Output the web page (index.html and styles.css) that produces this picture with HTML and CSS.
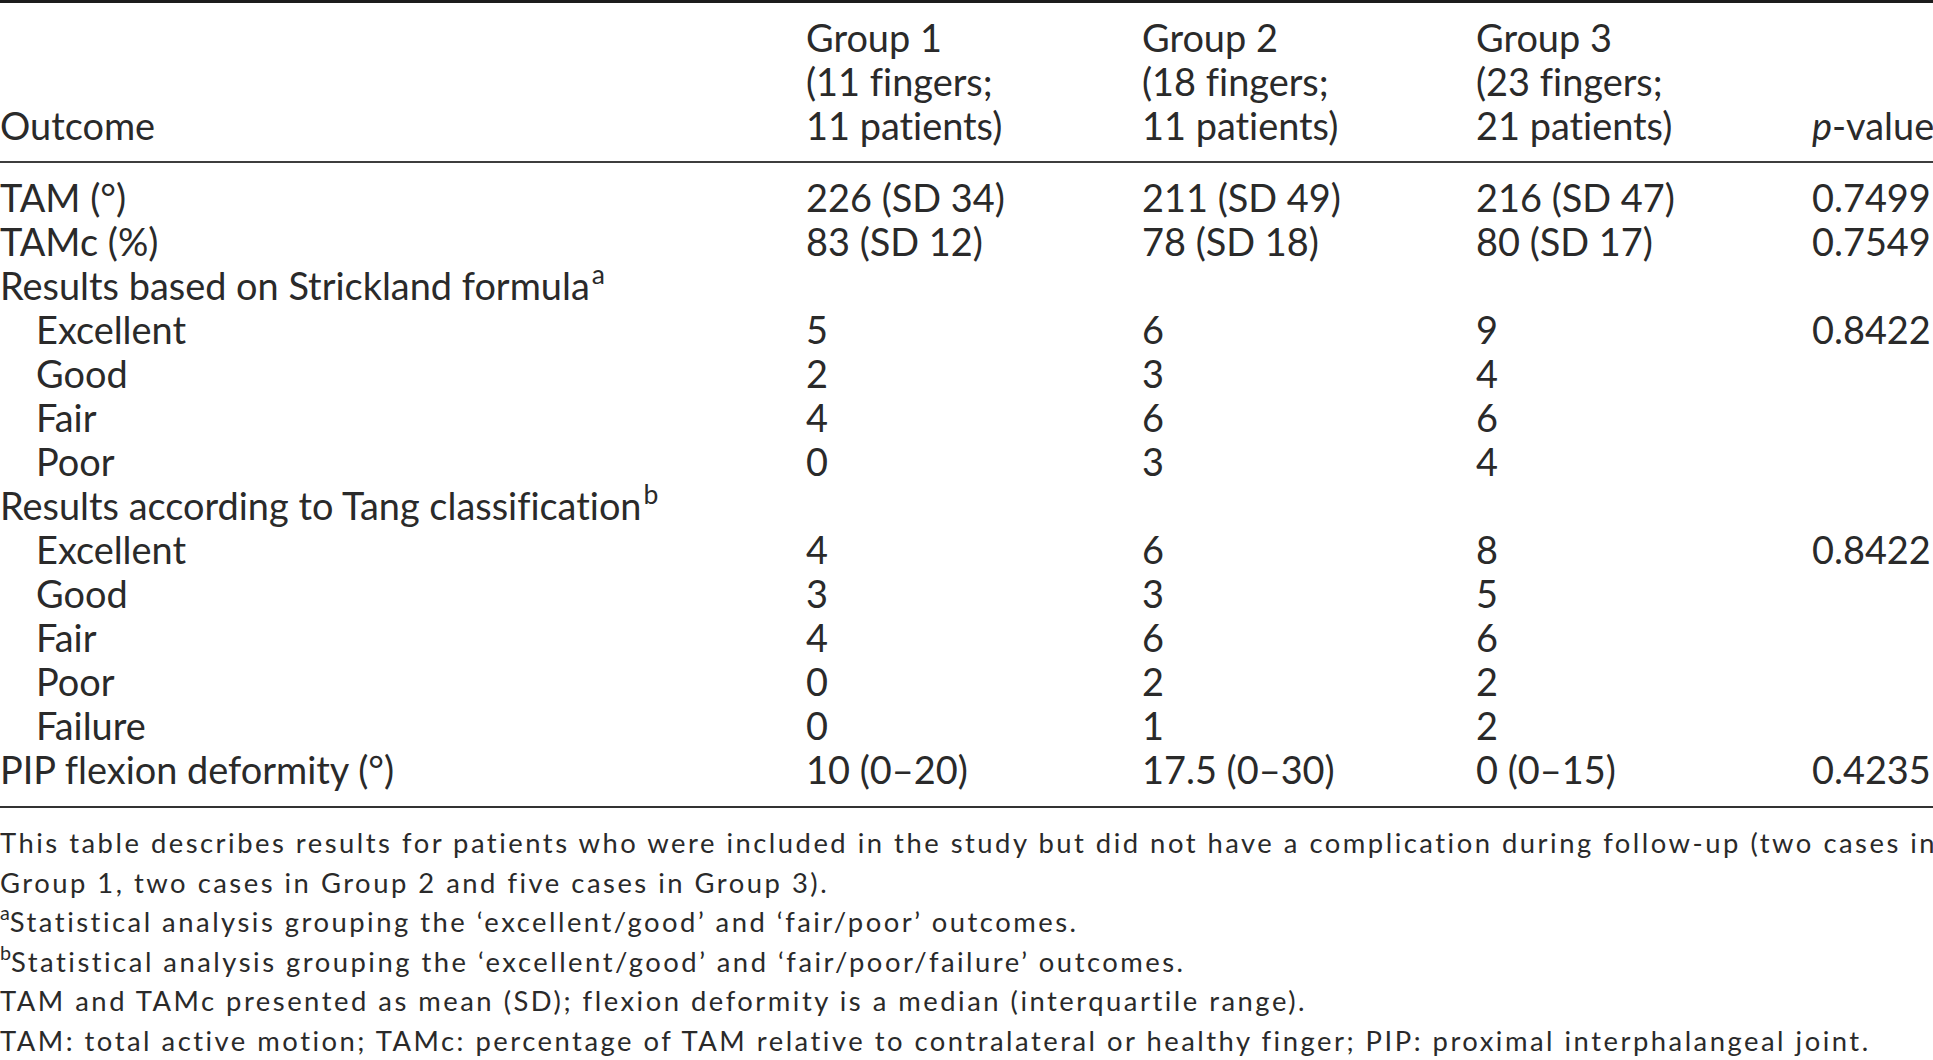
FILE: index.html
```html
<!DOCTYPE html>
<html lang="en">
<head>
<meta charset="utf-8">
<title>Outcomes table</title>
<link rel="stylesheet" href="styles.css">
</head>
<body>
<div class="page">
  <table class="outcomes">
    <colgroup>
      <col class="c-label">
      <col class="c-g1">
      <col class="c-g2">
      <col class="c-g3">
      <col class="c-p">
    </colgroup>
    <thead>
      <tr>
        <th>Outcome</th>
        <th>Group 1<br>(11 fingers;<br>11 patients)</th>
        <th>Group 2<br>(18 fingers;<br>11 patients)</th>
        <th>Group 3<br>(23 fingers;<br>21 patients)</th>
        <th><i>p</i>-value</th>
      </tr>
    </thead>
    <tbody>
      <tr><td>TAM (°)</td><td>226 (SD 34)</td><td>211 (SD 49)</td><td>216 (SD 47)</td><td>0.7499</td></tr>
      <tr><td>TAMc (%)</td><td>83 (SD 12)</td><td>78 (SD 18)</td><td>80 (SD 17)</td><td>0.7549</td></tr>
      <tr><td>Results based on Strickland formula<sup>a</sup></td><td></td><td></td><td></td><td></td></tr>
      <tr><td class="sub">Excellent</td><td>5</td><td>6</td><td>9</td><td>0.8422</td></tr>
      <tr><td class="sub">Good</td><td>2</td><td>3</td><td>4</td><td></td></tr>
      <tr><td class="sub">Fair</td><td>4</td><td>6</td><td>6</td><td></td></tr>
      <tr><td class="sub">Poor</td><td>0</td><td>3</td><td>4</td><td></td></tr>
      <tr><td>Results according to Tang classification<sup>b</sup></td><td></td><td></td><td></td><td></td></tr>
      <tr><td class="sub">Excellent</td><td>4</td><td>6</td><td>8</td><td>0.8422</td></tr>
      <tr><td class="sub">Good</td><td>3</td><td>3</td><td>5</td><td></td></tr>
      <tr><td class="sub">Fair</td><td>4</td><td>6</td><td>6</td><td></td></tr>
      <tr><td class="sub">Poor</td><td>0</td><td>2</td><td>2</td><td></td></tr>
      <tr><td class="sub">Failure</td><td>0</td><td>1</td><td>2</td><td></td></tr>
      <tr><td>PIP flexion deformity (°)</td><td>10 (0–20)</td><td>17.5 (0–30)</td><td>0 (0–15)</td><td>0.4235</td></tr>
    </tbody>
  </table>
  <div class="notes">
    <p>This table describes results for patients who were included in the study but did not have a complication during follow-up (two cases in<br>Group 1, two cases in Group 2 and five cases in Group 3).</p>
    <p><sup>a</sup>Statistical analysis grouping the ‘excellent/good’ and ‘fair/poor’ outcomes.</p>
    <p><sup>b</sup>Statistical analysis grouping the ‘excellent/good’ and ‘fair/poor/failure’ outcomes.</p>
    <p>TAM and TAMc presented as mean (SD); flexion deformity is a median (interquartile range).</p>
    <p>TAM: total active motion; TAMc: percentage of TAM relative to contralateral or healthy finger; PIP: proximal interphalangeal joint.</p>
  </div>
</div>
</body>
</html>
```
FILE: styles.css
```css
html, body {
  margin: 0;
  padding: 0;
  background: #ffffff;
}

body {
  width: 1933px;
  height: 1060px;
  overflow: hidden;
  color: #2a2a2a;
  font-family: Lato, "Open Sans", sans-serif;
  font-variant-ligatures: none;
}

.page {
  width: 1990px;
}

.outcomes {
  width: 1990px;
  table-layout: fixed;
  border-collapse: separate;
  border-spacing: 0;
  border-top: 3px solid #1c1c1c;
  border-bottom: 2px solid #333333;
  font-size: 37.9px;
  line-height: 44px;
}

.c-label { width: 806px; }
.c-g1 { width: 336px; }
.c-g2 { width: 334px; }
.c-g3 { width: 336px; }
.c-p { width: 178px; }

.outcomes th {
  text-align: left;
  font-weight: normal;
  vertical-align: bottom;
  padding: 13px 0 13px 0;
  border-bottom: 2px solid #3d3d3d;
  white-space: nowrap;
}

.outcomes td {
  padding: 0;
  white-space: nowrap;
  vertical-align: top;
}

.outcomes tbody tr:first-child td {
  padding-top: 13px;
}

.outcomes tbody tr:last-child td {
  padding-bottom: 14px;
}

.outcomes td.sub {
  padding-left: 36px;
}

.outcomes sup {
  font-size: 0.7em;
  line-height: 0;
  vertical-align: 16px;
  margin-left: 2px;
}

.notes {
  margin-top: 15px;
  font-size: 27.4px;
  line-height: 39.6px;
  letter-spacing: 2.5px;
  white-space: nowrap;
}

.notes p {
  margin: 0;
}

.notes sup {
  font-size: 0.72em;
  line-height: 0;
  vertical-align: 12px;
  letter-spacing: 0;
}
```
